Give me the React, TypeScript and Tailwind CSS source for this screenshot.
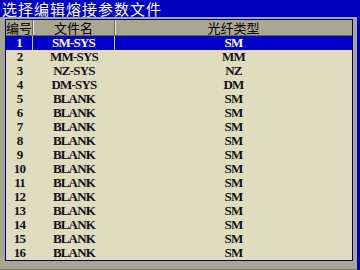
import React from "react";

const rows = [
  { no: 1, name: "SM-SYS", type: "SM" },
  { no: 2, name: "MM-SYS", type: "MM" },
  { no: 3, name: "NZ-SYS", type: "NZ" },
  { no: 4, name: "DM-SYS", type: "DM" },
  ...Array.from({ length: 12 }, (_, i) => ({ no: i + 5, name: "BLANK", type: "SM" })),
];

export default function App() {
  const selected = 1;

  return (
    <div className="w-[360px] h-[270px] bg-[#0000c0] flex flex-col overflow-hidden font-['Liberation_Serif','Noto_Sans_CJK_SC',serif]">
      {/* 标题栏 */}
      <div className="h-[17px] pl-[2px] text-white text-[15px] leading-[17px] tracking-[1px] font-['Noto_Sans_CJK_SC',sans-serif] whitespace-nowrap">
        选择编辑熔接参数文件
      </div>

      {/* 灰色外框 */}
      <div className="flex-1 w-[357px] bg-[#a8a890] pt-[2px] pl-[5px] pr-[4px] pb-[8px] border-b-2 border-[#78786a]">
        <div className="h-full border border-[#000080] bg-[#e0dcc0] flex flex-col">
          <div className="h-[16px] grid grid-cols-[27px_82px_1fr] bg-[#a8a890] border-b border-[#686858] text-[13px] leading-[15px] text-black font-['Noto_Sans_CJK_SC',sans-serif] whitespace-nowrap">
            <div className="border-r border-[#686858] shadow-[1px_0_0_#e8e8d8]">编号</div>
            <div className="text-center border-r border-[#686858] shadow-[1px_0_0_#e8e8d8]">文件名</div>
            <div className="text-center">光纤类型</div>
          </div>

          {rows.map((r) => {
            const isSel = r.no === selected;
            return (
              <div
                key={r.no}
                className={
                  "h-[14px] grid grid-cols-[27px_82px_1fr] text-[13px] leading-[14px] font-bold tracking-[-0.8px] whitespace-nowrap " +
                  (isSel ? "bg-[#0000c8] text-white" : "text-[#101010]")
                }
              >
                <div className={"text-center " + (isSel ? "border-r border-[#c8c8c8]" : "")}>{r.no}</div>
                <div className={"text-center " + (isSel ? "border-r border-[#c8c8c8]" : "")}>{r.name}</div>
                <div className="text-center">{r.type}</div>
              </div>
            );
          })}
        </div>
      </div>
    </div>
  );
}
